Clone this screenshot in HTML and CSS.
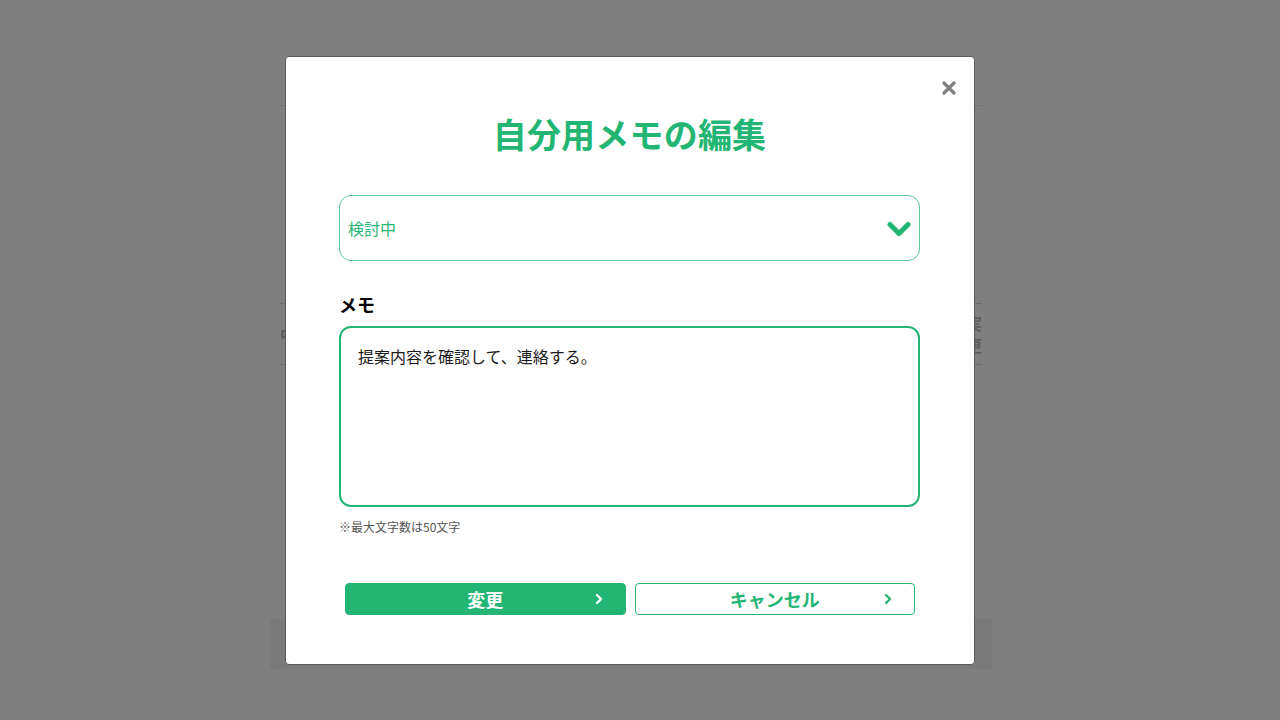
FILE: index.html
```html
<!DOCTYPE html>
<html lang="ja">
<head>
<meta charset="utf-8">
<title>自分用メモの編集</title>
<link rel="stylesheet" href="styles.css">
</head>
<body>
<div class="page">
  <div class="page-head"></div>
  <div class="page-row">
    <span class="cell-left">中</span>
    <span class="cell-right">実<br>更</span>
  </div>
  <div class="page-card"></div>
</div>

<div class="overlay">
  <div class="modal">
    <button class="close" aria-label="閉じる">
      <svg width="14" height="14" viewBox="0 0 14 14"><path d="M2 2 L12 12 M12 2 L2 12" stroke="#808080" stroke-width="3.2" stroke-linecap="round"/></svg>
    </button>
    <h1 class="title">自分用メモの編集</h1>
    <div class="select">
      <span class="select-text">検討中</span>
      <svg class="select-chev" width="24" height="16" viewBox="0 0 24 16"><path d="M3 3.5 L12 12.5 L21 3.5" fill="none" stroke="#23b574" stroke-width="5" stroke-linecap="round" stroke-linejoin="round"/></svg>
    </div>
    <div class="label">メモ</div>
    <div class="textarea">提案内容を確認して、連絡する。</div>
    <div class="note">※最大文字数は50文字</div>
    <div class="buttons">
      <button class="btn btn-primary">
        <span class="btn-text">変更</span>
        <svg class="btn-chev" width="8" height="12" viewBox="0 0 8 12"><path d="M2 2 L6 6 L2 10" fill="none" stroke="#ffffff" stroke-width="2.4" stroke-linecap="round" stroke-linejoin="round"/></svg>
      </button>
      <button class="btn btn-secondary">
        <span class="btn-text">キャンセル</span>
        <svg class="btn-chev" width="8" height="12" viewBox="0 0 8 12"><path d="M2 2 L6 6 L2 10" fill="none" stroke="#23b574" stroke-width="2.4" stroke-linecap="round" stroke-linejoin="round"/></svg>
      </button>
    </div>
  </div>
</div>
</body>
</html>
```

FILE: styles.css
```css
* { box-sizing: border-box; }
html, body { margin: 0; padding: 0; }
body {
  width: 1280px;
  height: 720px;
  overflow: hidden;
  background: #ffffff;
  font-family: "Noto Sans CJK JP", "Noto Sans", sans-serif;
}

/* background page (behind overlay) */
.page {
  width: 702px;
  margin-left: 280px;
  padding-top: 105px;
}
.page-head {
  border-top: 1px solid #e6e6e6;
  height: 198px;
}
.page-row {
  height: 62px;
  border-top: 1px solid #d8d8d8;
  border-bottom: 1px solid #d8d8d8;
  display: flex;
  justify-content: space-between;
  align-items: center;
  font-size: 16px;
  font-weight: bold;
  color: #bbbbbb;
  line-height: 1.4;
}
.page-card {
  margin: 254px -10px 0;
  height: 50px;
  background: #f4f4f4;
}

/* overlay */
.overlay {
  position: fixed;
  inset: 0;
  background: rgba(0, 0, 0, 0.5);
  display: flex;
  align-items: flex-start;
  padding: 56px 0 0 285px;
}
.modal {
  position: relative;
  width: 690px;
  height: 609px;
  background: #ffffff;
  border-radius: 4px;
  border: 1px solid #5a5a5a;
  padding: 57px 54px 0 53px;
  display: flex;
  flex-direction: column;
}
.close {
  position: absolute;
  top: 23px;
  right: 17px;
  width: 16px;
  height: 16px;
  padding: 0;
  border: 0;
  background: none;
  display: flex;
  align-items: center;
  justify-content: center;
}
.title {
  margin: 0;
  font-size: 34px;
  line-height: 40px;
  font-weight: bold;
  color: #23b574;
  text-align: center;
  letter-spacing: 0.2px;
}
.select {
  margin-top: 41px;
  height: 66px;
  border: 1px solid #5fc99a;
  border-radius: 12px;
  display: flex;
  align-items: center;
  justify-content: space-between;
  padding: 0 8px 0 8px;
}
.select-text {
  font-size: 16px;
  color: #23b574;
  line-height: 24px;
}
.select-chev { margin-top: 2px; }
.label {
  margin-top: 31px;
  font-size: 18px;
  line-height: 24px;
  font-weight: bold;
  color: #000000;
}
.textarea {
  margin-top: 10px;
  height: 181px;
  border: 2px solid #23b574;
  border-radius: 12px;
  padding: 16px 17px;
  font-size: 16px;
  line-height: 24px;
  color: #1a1a1a;
}
.note {
  margin-top: 12px;
  font-size: 12px;
  line-height: 16px;
  color: #555555;
}
.buttons {
  margin-top: 48px;
  padding: 0 5px 0 6px;
  display: flex;
  gap: 9px;
}
.btn {
  flex: 1;
  height: 32px;
  border-radius: 4px;
  position: relative;
  display: flex;
  align-items: center;
  justify-content: center;
  font-family: inherit;
  font-size: 18px;
  font-weight: bold;
  line-height: 24px;
  padding: 0;
  cursor: pointer;
}
.btn-primary {
  background: #23b574;
  border: 1px solid #23b574;
  color: #ffffff;
}
.btn-secondary {
  background: #ffffff;
  border: 1px solid #23b574;
  color: #23b574;
}
.btn-chev {
  position: absolute;
  right: 22px;
  top: 9px;
}
```
